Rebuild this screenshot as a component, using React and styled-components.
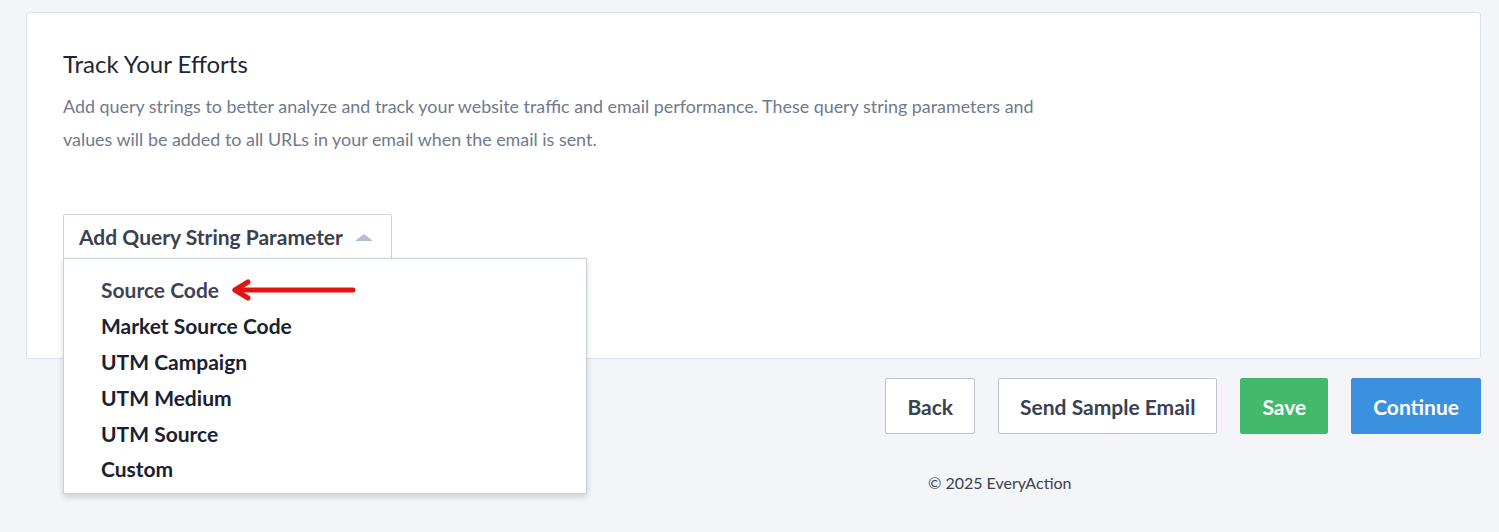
import React from "react";
import styled, { createGlobalStyle } from "styled-components";

const Global = createGlobalStyle`
  html, body { margin: 0; padding: 0; }
  body {
    background: #f4f5f9;
    font-family: Lato, "Noto Sans", sans-serif;
    color: #1f2633;
  }
`;

const Page = styled.div`
  padding: 12px 18px 60px 26px;
`;

const Card = styled.section`
  background: #fff;
  border: 1px solid #dde3ec;
  border-radius: 3px;
  height: 347px;
  box-sizing: border-box;
  padding: 35px 36px 0 36px;
`;

const Title = styled.h2`
  margin: 0;
  font-size: 24px;
  font-weight: 400;
  line-height: 32px;
  color: #1f2633;
`;

const Desc = styled.p`
  margin: 10px 0 0 0;
  max-width: 985px;
  font-size: 17.9px;
  line-height: 33px;
  color: #6f7a8c;
`;

const DropdownWrap = styled.div`
  position: relative;
  display: inline-block;
  margin-top: 58px;
`;

const Toggle = styled.button`
  display: flex;
  align-items: center;
  gap: 12px;
  height: 45px;
  box-sizing: border-box;
  padding: 0 18px 0 15px;
  background: #fff;
  border: 1px solid #c9d1de;
  border-bottom-color: transparent;
  border-radius: 2px 2px 0 0;
  font-family: Lato, "Noto Sans", sans-serif;
  font-size: 21px;
  font-weight: 700;
  color: #3a4150;
  cursor: pointer;
`;

const Caret = styled.span`
  width: 0;
  height: 0;
  border-left: 9px solid transparent;
  border-right: 9px solid transparent;
  border-bottom: 7px solid #b4bfd6;
  margin-top: 1px;
`;

const Menu = styled.ul`
  position: absolute;
  top: 44px;
  left: 0;
  width: 524px;
  box-sizing: border-box;
  margin: 0;
  padding: 13px 0 6px 0;
  list-style: none;
  background: #fff;
  border: 1px solid #c9d1de;
  box-shadow: 0 3px 6px rgba(30, 40, 60, 0.18);
  z-index: 2;
`;

const Item = styled.li`
  display: flex;
  align-items: center;
  gap: 12px;
  padding: 0 37px;
  height: 35.8px;
  font-size: 21px;
  font-weight: 700;
  color: ${(p) => (p.$active ? "#3d4555" : "#1b2130")};
`;

const Actions = styled.div`
  display: flex;
  justify-content: flex-end;
  gap: 23px;
  margin-top: 19px;
`;

const Btn = styled.button`
  height: 56px;
  box-sizing: border-box;
  padding: 0 21px;
  border-radius: 2px;
  border: 1px solid ${(p) => (p.$variant === "green" ? "#43b96b" : p.$variant === "blue" ? "#3b90e0" : "#b9c3d3")};
  background: ${(p) => (p.$variant === "green" ? "#43b96b" : p.$variant === "blue" ? "#3b90e0" : "#fff")};
  color: ${(p) => (p.$variant ? "#fff" : "#3a4150")};
  font-family: Lato, "Noto Sans", sans-serif;
  font-size: 21px;
  font-weight: 700;
  cursor: pointer;
`;

const Footer = styled.footer`
  padding: 39px 0 0 902px;
  font-size: 16px;
  line-height: 20px;
  color: #3a4150;
`;

function Arrow() {
  return (
    <svg width="128" height="22" viewBox="0 0 128 22" fill="none">
      <path d="M4 11 H122" stroke="#e31414" strokeWidth="5" strokeLinecap="round" />
      <path d="M17 3 L4 11 L17 19" stroke="#e31414" strokeWidth="5" strokeLinecap="round" strokeLinejoin="round" />
    </svg>
  );
}

const items = ["Source Code", "Market Source Code", "UTM Campaign", "UTM Medium", "UTM Source", "Custom"];

export default function App() {
  return (
    <>
      <Global />
      <Page>
        <Card>
          <Title>Track Your Efforts</Title>
          <Desc>
            Add query strings to better analyze and track your website traffic and email performance. These query string parameters and values will be added to all URLs in your email when the email is sent.
          </Desc>
          <DropdownWrap>
            <Toggle>
              Add Query String Parameter
              <Caret />
            </Toggle>
            <Menu>
              {items.map((it, i) => (
                <Item key={it} $active={i === 0}>
                  {it}
                  {i === 0 && <Arrow />}
                </Item>
              ))}
            </Menu>
          </DropdownWrap>
        </Card>
        <Actions>
          <Btn>Back</Btn>
          <Btn>Send Sample Email</Btn>
          <Btn $variant="green">Save</Btn>
          <Btn $variant="blue">Continue</Btn>
        </Actions>
        <Footer>© 2025 EveryAction</Footer>
      </Page>
    </>
  );
}
